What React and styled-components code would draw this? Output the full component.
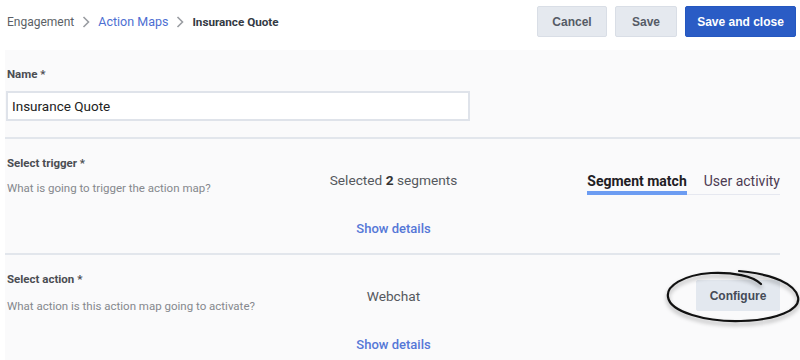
import React from 'react';
import styled, { createGlobalStyle } from 'styled-components';

const GlobalStyle = createGlobalStyle`
  html, body {
    margin: 0;
    padding: 0;
    background: #ffffff;
    font-family: Roboto, "Liberation Sans", Arial, sans-serif;
  }
  * { box-sizing: border-box; }
`;

const Page = styled.div`
  width: 800px;
  height: 360px;
  overflow: hidden;
  background: #ffffff;
`;

const TopBar = styled.header`
  height: 50px;
  display: flex;
  align-items: flex-start;
  justify-content: space-between;
  padding: 6px 4px 0 7px;
  background: #ffffff;
`;

const Crumbs = styled.nav`
  display: flex;
  align-items: center;
  gap: 8px;
  height: 31px;
  font-size: 12px;
`;

const Crumb = styled.span`
  color: ${p => (p.$link ? '#4d6fd2' : p.$current ? '#333a44' : '#5b5f66')};
  font-weight: ${p => (p.$current ? 700 : 400)};
  font-size: ${p => (p.$link ? 12.5 : p.$current ? 11.7 : 12)}px;
`;

const Actions = styled.div`
  display: flex;
  gap: 8px;
`;

const Button = styled.button`
  width: ${p => p.$w}px;
  height: 31px;
  padding: 0;
  border-radius: 2px;
  border: 1px solid ${p => (p.$primary ? '#2457c0' : p.$flat ? '#e3e8ef' : '#d9dee6')};
  background: ${p => (p.$primary ? '#2a5cc5' : p.$flat ? '#e3e8ef' : '#e5e9ef')};
  color: ${p => (p.$primary ? '#ffffff' : p.$flat ? '#454b57' : '#555b66')};
  font-family: "Liberation Sans", Arial, sans-serif;
  font-weight: 700;
  font-size: 12px;
  cursor: pointer;
`;

const Body = styled.main`
  margin-left: 5px;
  background: #fafafb;
  height: 310px;
`;

const Section = styled.section`
  padding: ${p => p.$top || 16}px 0 16px 2px;
  border-bottom: 2px solid ${p => (p.$last ? 'transparent' : '#e2e6ec')};
  margin-right: ${p => p.$right}px;
`;

const Label = styled.div`
  font-size: 11.5px;
  line-height: 16px;
  font-weight: 700;
  color: #4a4d52;
`;

const Desc = styled.div`
  margin-top: ${p => p.$gap || 9}px;
  font-size: 11.5px;
  line-height: 16px;
  color: #85888d;
`;

const TextInput = styled.input`
  display: block;
  margin-top: 9px;
  width: 464px;
  height: 30px;
  margin-left: -1px;
  padding: 0 4px;
  border: 2px solid #dfe3ea;
  background: #ffffff;
  font-family: Roboto, "Liberation Sans", Arial, sans-serif;
  font-size: 13.5px;
  color: #222;
  outline: none;
`;

const Row = styled.div`
  display: grid;
  grid-template-columns: 1fr auto 1fr;
  align-items: start;
`;

const Value = styled.div`
  margin-top: ${p => p.$top}px;
  font-size: 13.7px;
  line-height: 16px;
  color: #55585d;
  b { color: #333; font-weight: 700; }
`;

const Right = styled.div`
  display: flex;
  justify-content: flex-end;
  margin-top: ${p => p.$top}px;
`;

const Tabs = styled.div`
  display: flex;
  border-bottom: 1px solid #e6e8f0;
  gap: 17px;
`;

const Tab = styled.div`
  font-size: 14px;
  line-height: 16px;
  padding-bottom: 2px;
  margin-bottom: -1px;
  font-weight: ${p => (p.$active ? 700 : 400)};
  color: ${p => (p.$active ? '#1f2024' : '#4d3a52')};
  border-bottom: 4px solid ${p => (p.$active ? '#6c9cf2' : 'transparent')};
`;

const ShowDetails = styled.a`
  display: block;
  margin-top: ${p => p.$top}px;
  text-align: center;
  font-size: 13px;
  line-height: 16px;
  font-weight: 500;
  color: #5577d7;
  cursor: pointer;
`;

const Highlight = styled.div`
  position: relative;
`;

const Scribble = styled.svg`
  position: absolute;
  left: -35px;
  top: -18px;
  overflow: visible;
  pointer-events: none;
  filter: drop-shadow(0 3px 2px rgba(0, 0, 0, 0.35));
`;

const Chevron = () => (
  <svg width="8" height="12" viewBox="0 0 8 12">
    <path d="M1.5 1 L6.5 6 L1.5 11" fill="none" stroke="#9a9da2" strokeWidth="1.6" />
  </svg>
);

export default function App() {
  return (
    <Page>
      <GlobalStyle />
      <TopBar>
        <Crumbs>
          <Crumb>Engagement</Crumb>
          <Chevron />
          <Crumb $link>Action Maps</Crumb>
          <Chevron />
          <Crumb $current>Insurance Quote</Crumb>
        </Crumbs>
        <Actions>
          <Button $w={70}>Cancel</Button>
          <Button $w={62}>Save</Button>
          <Button $w={111} $primary>Save and close</Button>
        </Actions>
      </TopBar>

      <Body>
        <Section $right={0}>
          <Label>Name *</Label>
          <TextInput defaultValue="Insurance Quote" />
        </Section>

        <Section $right={20} $top={16}>
          <Row>
            <div>
              <Label>Select trigger *</Label>
              <Desc>What is going to trigger the action map?</Desc>
            </div>
            <Value $top={17}>
              Selected <b>2</b> segments
            </Value>
            <Right $top={18}>
              <Tabs>
                <Tab $active>Segment match</Tab>
                <Tab>User activity</Tab>
              </Tabs>
            </Right>
          </Row>
          <ShowDetails $top={25}>Show details</ShowDetails>
        </Section>

        <Section $top={16} $right={20} $last>
          <Row>
            <div>
              <Label>Select action *</Label>
              <Desc $gap={11}>What action is this action map going to activate?</Desc>
            </div>
            <Value $top={17}>Webchat</Value>
            <Right $top={9}>
              <Highlight>
                <Button $w={84} $flat>Configure</Button>
                <Scribble width="140" height="68" viewBox="0 0 140 68">
                  <path
                    d="M100 22 C92 14, 72 10, 50 11 C22 13, 5 24, 7 35 C9 50, 45 60, 80 59 C115 58, 140 48, 137 35 C134 22, 112 12, 78 9"
                    fill="none"
                    stroke="#111"
                    strokeWidth="2.2"
                    strokeLinecap="round"
                  />
                </Scribble>
              </Highlight>
            </Right>
          </Row>
          <ShowDetails $top={23}>Show details</ShowDetails>
        </Section>
      </Body>
    </Page>
  );
}
